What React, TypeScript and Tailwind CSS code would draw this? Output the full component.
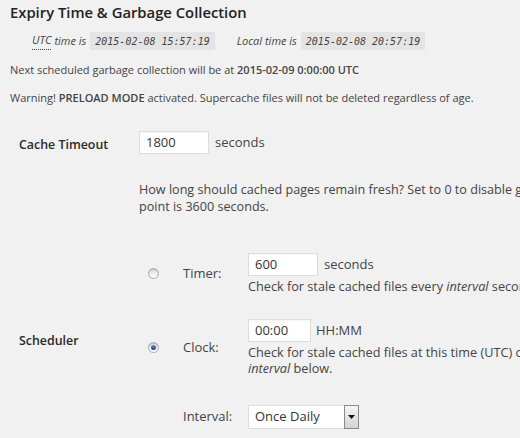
import type { ReactNode } from "react";

const sans = "font-['Open_Sans',_'Liberation_Sans',_sans-serif]";

const Radio = ({ checked = false }: { checked?: boolean }) => (
  <span className="flex h-[11px] w-[11px] items-center justify-center rounded-full border border-[#a9a9a9] bg-gradient-to-b from-[#dcdcdc] to-[#ffffff] shadow-[inset_0_1px_1px_rgba(0,0,0,0.15)]">
    {checked && (
      <span className="h-[5px] w-[5px] rounded-full bg-gradient-to-b from-[#5c8fd1] to-[#123f7a]" />
    )}
  </span>
);

const TextBox = ({ value, width }: { value: string; width: string }) => (
  <span
    className={`${width} inline-flex h-[23px] items-center border border-[#dddddd] bg-white px-[6px] text-[13px] text-[#333] shadow-[inset_0_1px_2px_rgba(0,0,0,0.04)]`}
  >
    {value}
  </span>
);

const Code = ({ children }: { children: ReactNode }) => (
  <code className="inline-flex h-[18px] items-center bg-[#e4e4e4] px-[5px] font-['DejaVu_Sans_Mono',_monospace] text-[10px] italic text-[#444]">
    {children}
  </code>
);

export default function App() {
  return (
    <div className={`${sans} h-[438px] w-[520px] overflow-hidden bg-[#f1f1f1] text-[#444]`}>
      <div className="w-[760px] px-[10px]">
        <h3 className="text-[14.8px] font-semibold leading-[24px] text-[#222]">
          Expiry Time &amp; Garbage Collection
        </h3>

        <p className="mt-[8px] flex h-[18px] items-center pl-[22px] text-[11px] italic">
          <abbr className="no-underline border-b border-dotted border-[#444]" title="Coordinated Universal Time">
            UTC
          </abbr>
          <span className="ml-[3px] mr-[4px]">time is</span>
          <Code>2015-02-08 15:57:19</Code>
          <span className="ml-[22px] mr-[4px]">Local time is</span>
          <Code>2015-02-08 20:57:19</Code>
        </p>

        <p className="mt-[11px] text-[11px] leading-[18px]">
          Next scheduled garbage collection will be at <strong className="font-semibold">2015-02-09 0:00:00 UTC</strong>
        </p>

        <p className="mt-[10px] text-[11px] leading-[18px]">
          Warning! <strong className="font-semibold">PRELOAD MODE</strong> activated. Supercache files will not be
          deleted regardless of age.
        </p>

        {/* Cache timeout */}
        <div className="mt-[24px] flex">
          <div className="w-[129px] pl-[9px] pt-[4px] text-[12.4px] font-semibold leading-[20px] text-[#2a2a2a]">
            Cache Timeout
          </div>
          <div className="flex-1">
            <div className="flex items-center gap-[6px] text-[13px]">
              <TextBox value="1800" width="w-[70px]" />
              <span>seconds</span>
            </div>
            <p className="mt-[27px] text-[12.6px] leading-[17px]">
              How long should cached pages remain fresh? Set to 0 to disable garbage collection. A good starting
              <br />
              point is 3600 seconds.
            </p>
          </div>
        </div>

        {/* Scheduler */}
        <div className="mt-[38px] flex items-center">
          <div className="w-[129px] pl-[9px] text-[12.4px] font-semibold leading-[20px] text-[#2a2a2a]">
            Scheduler
          </div>
          <div className="flex-1">
            <div className="flex items-center">
              <div className="flex w-[44px] pl-[9px]">
                <Radio />
              </div>
              <div className="w-[65px] text-[13px]">Timer:</div>
              <div>
                <div className="flex items-center gap-[6px] text-[13px]">
                  <TextBox value="600" width="w-[70px]" />
                  <span>seconds</span>
                </div>
                <p className="mt-[2px] text-[12.7px] leading-[16px]">
                  Check for stale cached files every <em>interval</em> seconds.
                </p>
              </div>
            </div>

            <div className="mt-[25px] flex items-center">
              <div className="flex w-[44px] pl-[9px]">
                <Radio checked />
              </div>
              <div className="w-[65px] text-[13px]">Clock:</div>
              <div>
                <div className="flex items-center gap-[5px] text-[13px]">
                  <TextBox value="00:00" width="w-[63px]" />
                  <span>HH:MM</span>
                </div>
                <p className="mt-[2px] text-[12.7px] leading-[16px]">
                  Check for stale cached files at this time (UTC) or starting at this time every
                  <br />
                  <em>interval</em> below.
                </p>
              </div>
            </div>

            <div className="mt-[29px] flex items-center">
              <div className="w-[44px]" />
              <div className="w-[65px] text-[13px]">Interval:</div>
              <div className="flex h-[24px] w-[111px] items-stretch border border-[#dddddd] bg-white">
                <span className="flex flex-1 items-center pl-[6px] text-[13px] text-[#333]">Once Daily</span>
                <span className="my-[-1px] mr-[-1px] flex w-[15px] items-center justify-center border border-[#8a8a8a] bg-gradient-to-b from-[#f4f4f4] to-[#d4d4d4]">
                  <svg width="7" height="4" viewBox="0 0 7 4">
                    <path d="M0 0h7L3.5 4z" fill="#111" />
                  </svg>
                </span>
              </div>
            </div>
          </div>
        </div>
      </div>
    </div>
  );
}
